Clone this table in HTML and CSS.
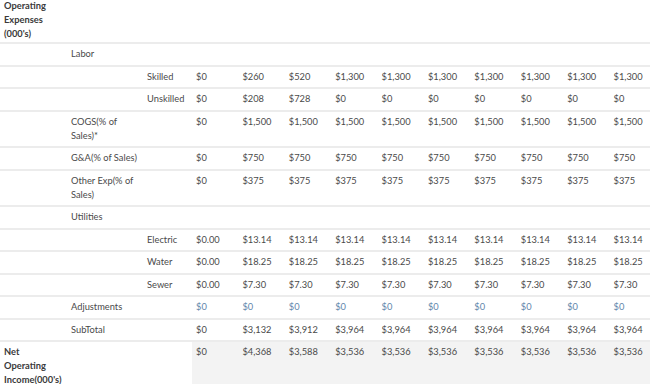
FILE: index.html
```html
<!DOCTYPE html>
<html>
<head>
<meta charset="utf-8">
<link rel="stylesheet" href="styles.css">
</head>
<body>
<table class="fin">
<colgroup>
<col class="c-a"><col class="c-b"><col class="c-c">
<col class="c-d"><col class="c-d"><col class="c-d"><col class="c-d"><col class="c-d">
<col class="c-d"><col class="c-d"><col class="c-d"><col class="c-d"><col class="c-d">
</colgroup>
<tbody>
<tr class="head"><th class="lbl">Operating Expenses (000's)</th><td></td><td></td><td></td><td></td><td></td><td></td><td></td><td></td><td></td><td></td><td></td><td></td></tr>
<tr><td></td><td>Labor</td><td></td><td></td><td></td><td></td><td></td><td></td><td></td><td></td><td></td><td></td><td></td></tr>
<tr><td></td><td></td><td>Skilled</td><td>$0</td><td>$260</td><td>$520</td><td>$1,300</td><td>$1,300</td><td>$1,300</td><td>$1,300</td><td>$1,300</td><td>$1,300</td><td>$1,300</td></tr>
<tr><td></td><td></td><td>Unskilled</td><td>$0</td><td>$208</td><td>$728</td><td>$0</td><td>$0</td><td>$0</td><td>$0</td><td>$0</td><td>$0</td><td>$0</td></tr>
<tr><td></td><td>COGS(% of Sales)*</td><td></td><td>$0</td><td>$1,500</td><td>$1,500</td><td>$1,500</td><td>$1,500</td><td>$1,500</td><td>$1,500</td><td>$1,500</td><td>$1,500</td><td>$1,500</td></tr>
<tr><td></td><td>G&amp;A(% of Sales)</td><td></td><td>$0</td><td>$750</td><td>$750</td><td>$750</td><td>$750</td><td>$750</td><td>$750</td><td>$750</td><td>$750</td><td>$750</td></tr>
<tr><td></td><td>Other Exp(% of Sales)</td><td></td><td>$0</td><td>$375</td><td>$375</td><td>$375</td><td>$375</td><td>$375</td><td>$375</td><td>$375</td><td>$375</td><td>$375</td></tr>
<tr><td></td><td>Utilities</td><td></td><td></td><td></td><td></td><td></td><td></td><td></td><td></td><td></td><td></td><td></td></tr>
<tr><td></td><td></td><td>Electric</td><td>$0.00</td><td>$13.14</td><td>$13.14</td><td>$13.14</td><td>$13.14</td><td>$13.14</td><td>$13.14</td><td>$13.14</td><td>$13.14</td><td>$13.14</td></tr>
<tr><td></td><td></td><td>Water</td><td>$0.00</td><td>$18.25</td><td>$18.25</td><td>$18.25</td><td>$18.25</td><td>$18.25</td><td>$18.25</td><td>$18.25</td><td>$18.25</td><td>$18.25</td></tr>
<tr><td></td><td></td><td>Sewer</td><td>$0.00</td><td>$7.30</td><td>$7.30</td><td>$7.30</td><td>$7.30</td><td>$7.30</td><td>$7.30</td><td>$7.30</td><td>$7.30</td><td>$7.30</td></tr>
<tr class="adj"><td></td><td>Adjustments</td><td></td><td class="v">$0</td><td class="v">$0</td><td class="v">$0</td><td class="v">$0</td><td class="v">$0</td><td class="v">$0</td><td class="v">$0</td><td class="v">$0</td><td class="v">$0</td><td class="v">$0</td></tr>
<tr><td></td><td>SubTotal</td><td></td><td>$0</td><td>$3,132</td><td>$3,912</td><td>$3,964</td><td>$3,964</td><td>$3,964</td><td>$3,964</td><td>$3,964</td><td>$3,964</td><td>$3,964</td></tr>
<tr class="net"><th class="lbl">Net Operating Income(000's)</th><td class="blank"></td><td class="blank"></td><td>$0</td><td>$4,368</td><td>$3,588</td><td>$3,536</td><td>$3,536</td><td>$3,536</td><td>$3,536</td><td>$3,536</td><td>$3,536</td><td>$3,536</td></tr>
</tbody>
</table>
</body>
</html>
```
FILE: styles.css
```css
html, body {
  margin: 0;
  padding: 0;
  background: #ffffff;
  overflow: hidden;
}
body {
  font-family: Lato, "Open Sans", sans-serif;
  font-size: 9.3px;
  color: #4a4a4a;
}
.fin {
  table-layout: fixed;
  width: 656px;
  border-collapse: collapse;
  margin-top: -1px;
}
.c-a { width: 67px; }
.c-b { width: 76px; }
.c-c { width: 49px; }
.c-d { width: 46.4px; }
.fin td, .fin th {
  padding: 3px 4px 3.5px 4px;
  line-height: 14px;
  text-align: left;
  vertical-align: top;
  border-bottom: 2px solid #ececec;
  white-space: normal;
  overflow: visible;
}
.fin th.lbl {
  font-weight: bold;
  color: #3a3a3a;
}
.fin tr.head td, .fin tr.head th {
  padding-top: 0;
  padding-bottom: 1px;
}
.fin td.v {
  color: #5f86ab;
}
.fin tr.net td {
  background: #f3f3f3;
  border-bottom: none;
  height: 40px;
}
.fin tr.net td.blank {
  background: #ffffff;
}
.fin tr.net th {
  border-bottom: none;
}
```
